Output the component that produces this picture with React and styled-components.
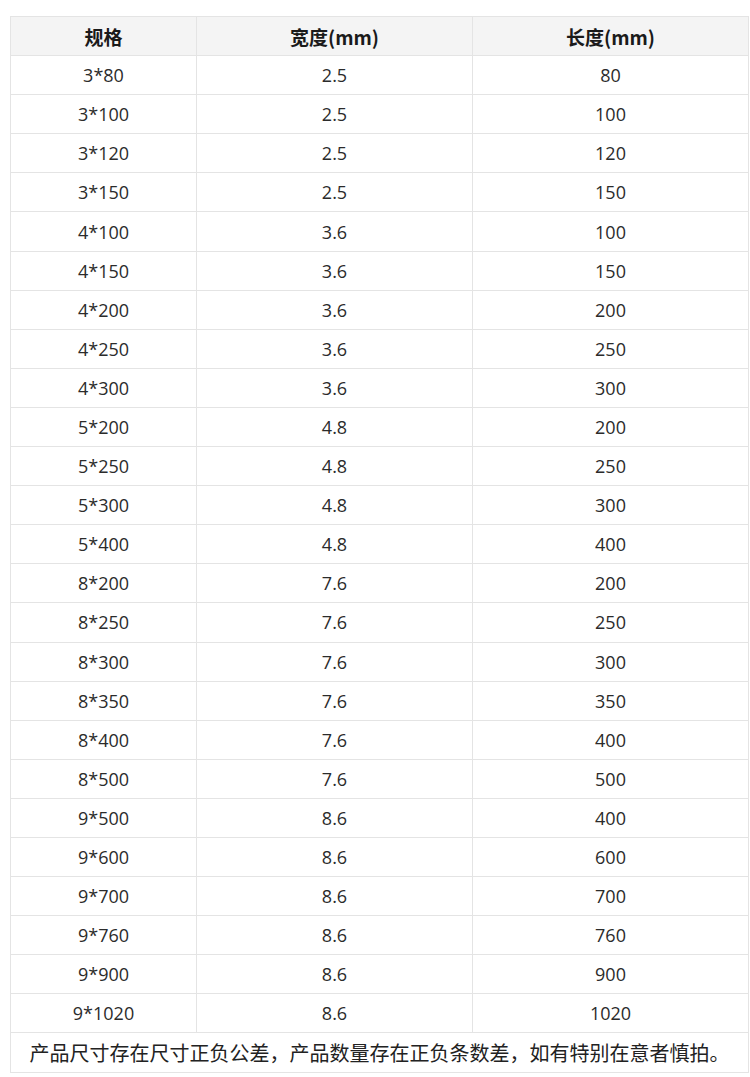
import React from "react";
import styled, { createGlobalStyle } from "styled-components";

const rows = [
  ["3*80", "2.5", "80"],
  ["3*100", "2.5", "100"],
  ["3*120", "2.5", "120"],
  ["3*150", "2.5", "150"],
  ["4*100", "3.6", "100"],
  ["4*150", "3.6", "150"],
  ["4*200", "3.6", "200"],
  ["4*250", "3.6", "250"],
  ["4*300", "3.6", "300"],
  ["5*200", "4.8", "200"],
  ["5*250", "4.8", "250"],
  ["5*300", "4.8", "300"],
  ["5*400", "4.8", "400"],
  ["8*200", "7.6", "200"],
  ["8*250", "7.6", "250"],
  ["8*300", "7.6", "300"],
  ["8*350", "7.6", "350"],
  ["8*400", "7.6", "400"],
  ["8*500", "7.6", "500"],
  ["9*500", "8.6", "400"],
  ["9*600", "8.6", "600"],
  ["9*700", "8.6", "700"],
  ["9*760", "8.6", "760"],
  ["9*900", "8.6", "900"],
  ["9*1020", "8.6", "1020"],
];

const GlobalStyle = createGlobalStyle`
  body {
    margin: 0;
    background: #fff;
    font-family: "Open Sans", "Noto Sans CJK SC", sans-serif;
  }
`;

const Page = styled.div`
  padding: 16px 3px 6px 10px;
`;

const Table = styled.table`
  width: 738px;
  border-collapse: collapse;
  table-layout: fixed;
  color: #2b2b2b;
`;

const Row = styled.tr`
  height: 39.1px;
`;

const HeadCell = styled.th`
  background: #f4f4f4;
  border: 1px solid #e4e4e4;
  padding: 0;
  font-family: "Noto Sans CJK SC", "DejaVu Sans", sans-serif;
  font-size: 19px;
  font-weight: 700;
  color: #1a1a1a;
  text-align: center;
  vertical-align: middle;
`;

const Cell = styled.td`
  border: 1px solid #e4e4e4;
  padding: 0;
  font-size: 18px;
  text-align: center;
  vertical-align: middle;
`;

const Note = styled.td`
  border: 1px solid #e4e4e4;
  padding: 0;
  font-family: "Noto Sans CJK SC", sans-serif;
  font-size: 20px;
  color: #222;
  text-align: center;
  vertical-align: middle;
`;

export default function App() {
  return (
    <>
      <GlobalStyle />
      <Page>
        <Table>
          <colgroup>
            <col style={{ width: 186 }} />
            <col style={{ width: 276 }} />
            <col style={{ width: 276 }} />
          </colgroup>
          <thead>
            <Row>
              <HeadCell>规格</HeadCell>
              <HeadCell>宽度(mm)</HeadCell>
              <HeadCell>长度(mm)</HeadCell>
            </Row>
          </thead>
          <tbody>
            {rows.map((r) => (
              <Row key={r[0]}>
                <Cell>{r[0]}</Cell>
                <Cell>{r[1]}</Cell>
                <Cell>{r[2]}</Cell>
              </Row>
            ))}
            <Row>
              <Note colSpan={3}>
                产品尺寸存在尺寸正负公差，产品数量存在正负条数差，如有特别在意者慎拍。
              </Note>
            </Row>
          </tbody>
        </Table>
      </Page>
    </>
  );
}
